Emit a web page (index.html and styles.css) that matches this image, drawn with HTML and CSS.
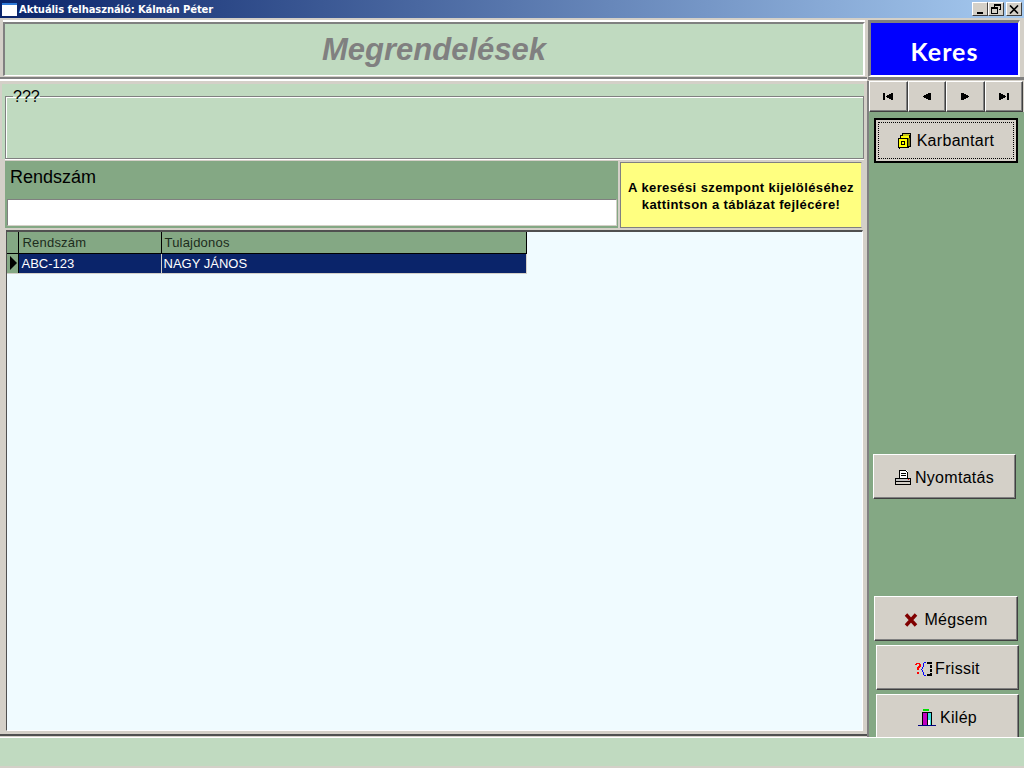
FILE: index.html
```html
<!DOCTYPE html>
<html lang="en">

<head>
    <meta charset="utf-8" />
    <title>Megrendelések</title>
    <link rel="stylesheet" href="styles.css">
</head>

<body>
    <div class="titlebar">
        <span class="app-icon"></span>
        <span class="title-text">Aktuális felhasználó: Kálmán Péter</span>
        <div class="win-buttons">
            <span class="win-btn"><svg width="9" height="9" shape-rendering="crispEdges"><rect x="1" y="7" width="6" height="2"/></svg></span>
            <span class="win-btn"><svg width="10" height="10" fill="none" stroke="#000" shape-rendering="crispEdges"><path d="M3.5 2.5v-2h6v5h-2M3.5 1.5h6M.5 4.5h6v5h-6zM.5 3.5h6v1h-6z"/></svg></span>
            <span class="win-btn win-close"><svg width="10" height="9" stroke="#000" stroke-width="1.6"><path d="M1 0.5l8 8M9 0.5l-8 8"/></svg></span>
        </div>
    </div>

    <div class="main">
        <div class="left">
            <div class="heading">Megrendelések</div>
            <div class="separator"></div>
            <div class="content">
                <div class="group">
                    <fieldset class="group-frame">
                        <legend>???</legend>
                    </fieldset>
                </div>
                <div class="search-row">
                    <div class="search-box">
                        <div class="search-label">Rendszám</div>
                        <input class="search-input" type="text" />
                    </div>
                    <div class="hint">A keresési szempont kijelöléséhez<br>kattintson a táblázat fejlécére!</div>
                </div>
                <div class="grid-area">
                    <table class="grid">
                        <tr>
                            <th class="col-ind"></th>
                            <th class="col-plate">Rendszám</th>
                            <th class="col-owner">Tulajdonos</th>
                        </tr>
                        <tr class="selected">
                            <td class="indicator"><span class="arrow"></span></td>
                            <td class="cell-plate">ABC-123</td>
                            <td>NAGY JÁNOS</td>
                        </tr>
                    </table>
                </div>
                <div class="bottom-line"></div>
            </div>
        </div>

        <div class="right">
            <div class="keres-frame"><div class="keres">Keres</div></div>
            <div class="keres-line"></div>
            <div class="right-lower">
                <div class="nav">
                    <button class="nav-btn"><svg width="10" height="7" shape-rendering="crispEdges"><path d="M0 0h2v7H0zM3 3h1V2h2V1h2V0h2v7H8V6H6V5H4V4H3z"/></svg></button>
                    <button class="nav-btn"><svg width="8" height="7" shape-rendering="crispEdges"><path d="M0 3h1V2h2V1h2V0h3v7H5V6H3V5H1V4H0z"/></svg></button>
                    <button class="nav-btn"><svg width="8" height="7" shape-rendering="crispEdges"><path d="M8 3H7V2H5V1H3V0H0v7h3V6h2V5h2V4h1z"/></svg></button>
                    <button class="nav-btn"><svg width="10" height="7" shape-rendering="crispEdges"><path d="M8 0h2v7H8zM7 3H6V2H4V1H2V0H0v7h2V6h2V5h2V4h1z"/></svg></button>
                </div>
                <div class="side">
                    <button class="btn btn-karbantart">
                        <span class="focus-ring">
                            <svg class="ico" width="13" height="16" shape-rendering="crispEdges">
                                <path d="M4 0h9v14h-2v1H2v1H1v-1H0V5h2V2h2z" fill="#000"/>
                                <path d="M5 1h7v1h-1v1H5z" fill="#c8c820"/>
                                <path d="M3 3h8v2H3z" fill="#ffff00"/>
                                <path d="M1 6h8v8H1z" fill="#ffff00"/>
                                <path d="M3 8h4v1H3zM3 11h4v1H3zM3 8h1v4H3zM6 8h1v4H6z" fill="#000"/>
                                <path d="M10 5h2v8h-2z" fill="#808000"/>
                            </svg>Karbantart
                        </span>
                    </button>
                    <button class="btn btn-print">
                        <svg class="ico" width="16" height="15" shape-rendering="crispEdges">
                            <path d="M4 0h7l2 2v6H4z" fill="#fff"/>
                            <path d="M4 0h7v1H5v7H4zM11 1h1v1h1v6h-1V2h-1zM6 3h5v1H6zM6 5h5v1H6z" fill="#000"/>
                            <path d="M1 8h14v3H1z" fill="#c0c0c0"/>
                            <path d="M0 8h16v1H0zM0 9h1v6H0zM15 9h1v6h-1zM0 14h16v1H0zM1 11h14v1H1z" fill="#000"/>
                            <path d="M13 9h1v1h-1z" fill="#ff0000"/>
                        </svg>Nyomtatás
                    </button>
                    <button class="btn btn-cancel">
                        <svg class="ico" width="14" height="14" fill="none" stroke="#800000" stroke-width="3.4"><path d="M2 1.5l10 11M12 1.5l-10 11"/></svg>Mégsem
                    </button>
                    <button class="btn btn-refresh">
                        <svg class="ico" width="17" height="14" shape-rendering="crispEdges">
                            <path d="M0 2h1V1h4v1h1v3H5v1H4v2H2V5h1V4h1V2H2v1H0zM2 10h2v2H2z" fill="#ff0000"/>
                            <path d="M9 0h2v1H9v4H8v2H7v1h1v2h1v3h2v1H9v-1H8v-3H7V8H6V7h1V5h1V1h1z" fill="#0000ff"/>
                            <path d="M12 0h5v2h-5zM15 3h2v3h-2zM15 7h2v3h-2zM15 11h2v1h-2zM12 12h5v2h-5z" fill="#000"/>
                        </svg>Frissit
                    </button>
                    <button class="btn btn-exit">
                        <svg class="ico" width="18" height="17" shape-rendering="crispEdges">
                            <path d="M5 0h6v2H5z" fill="#00e000"/>
                            <path d="M4 3h10v13H4z" fill="#000"/>
                            <path d="M5 4h4v12H5z" fill="#c000c0"/>
                            <path d="M10 4h3v12h-3z" fill="#40e0e0"/>
                            <path d="M10 11h2v6h-2z" fill="#fff"/>
                            <path d="M0 16h18v1H0z" fill="#000080"/>
                        </svg>Kilép
                    </button>
                </div>
            </div>
        </div>
    </div>

    <div class="footer"></div>
</body>
</html>
```

FILE: styles.css
```css
body {
    margin: 0;
    width: 1024px;
    height: 768px;
    overflow: hidden;
    background: #d4d0c8;
    font-family: "Liberation Sans", Arial, sans-serif;
    color: #000;
}

button {
    font-family: inherit;
    color: #000;
    padding: 0;
}

/* title bar */

.titlebar {
    display: flex;
    align-items: center;
    height: 18px;
    padding-left: 2px;
    background: linear-gradient(to right, #0a246a, #a6caf0);
}

.app-icon {
    width: 15px;
    height: 11px;
    background: #fff;
    border-top: 2px solid #2f7ad8;
}

.title-text {
    margin-left: 2px;
    color: #fff;
    font-family: "DejaVu Sans", sans-serif;
    font-size: 10px;
    font-weight: bold;
    letter-spacing: -0.1px;
    white-space: nowrap;
}

.win-buttons {
    display: flex;
    margin-left: auto;
    margin-right: 2px;
}

.win-btn {
    display: flex;
    align-items: center;
    justify-content: center;
    box-sizing: border-box;
    width: 16px;
    height: 14px;
    background: #d4d0c8;
    border: 1px solid;
    border-color: #fff #404040 #404040 #fff;
}

.win-close {
    margin-left: 2px;
}

/* main layout */

.main {
    display: flex;
    height: 719px;
}

.left {
    width: 867px;
    padding-top: 4px;
    box-sizing: border-box;
}

.heading {
    box-sizing: border-box;
    height: 54px;
    margin-left: 3px;
    margin-right: 2px;
    line-height: 51px;
    text-align: center;
    background: #c0dac0;
    border: 2px solid;
    border-width: 2px 2px 1px 2px;
    border-color: #808080 #fff #fff #808080;
    box-shadow: 0 -2px 0 #fff;
    color: #808080;
    font-size: 31px;
    font-weight: bold;
    font-style: italic;
}

.separator {
    height: 2px;
    margin-top: 1px;
    background: #808080;
    border-bottom: 2px solid #fff;
}

.content {
    padding: 3px 0 0 2px;
}

.group {
    height: 69px;
    padding-top: 6px;
    margin-right: 3px;
    background: #c0dac0;
}

.group-frame {
    box-sizing: border-box;
    height: 69px;
    margin: 0 0 0 3px;
    padding: 0;
    border: 1px solid #808080;
    box-shadow: inset 1px 1px 0 #fff, 0 1px 0 #fff;
}

.group-frame legend {
    margin-left: 7px;
    padding: 0;
    font-size: 16px;
    line-height: 13px;
}

.search-row {
    display: flex;
    height: 67px;
    margin: 2px 0 0 3px;
}

.search-box {
    width: 613px;
    box-sizing: border-box;
    padding: 0 2px;
    background: #84a884;
}

.search-label {
    height: 38px;
    padding-left: 3px;
    line-height: 33px;
    font-size: 18px;
}

.search-input {
    display: block;
    box-sizing: border-box;
    width: 610px;
    height: 27px;
    margin: 0;
    background: #fff;
    border: 1px solid;
    border-color: #808080 #d4d0c8 #d4d0c8 #808080;
    outline: 0;
}

.hint {
    box-sizing: border-box;
    width: 242px;
    margin: 1px 0 0 2px;
    padding-top: 16px;
    text-align: center;
    background: #ffff80;
    border: 1px solid;
    border-color: #808080 #d4d0c8 #808080 #808080;
    font-size: 13px;
    line-height: 17px;
    font-weight: bold;
    letter-spacing: 0.4px;
}

.grid-area {
    box-sizing: border-box;
    width: 857px;
    height: 501px;
    margin: 2px 0 0 4px;
    background: #f0fbff;
    border: 1px solid;
    border-width: 2px 1px 1px 1px;
    border-color: #505050 #fff #fff #505050;
}

.grid {
    width: 520px;
    table-layout: fixed;
    border-collapse: collapse;
    font-size: 13px;
}

.grid th,
.grid td {
    box-sizing: border-box;
    height: 20px;
    padding: 0 0 0 2px;
    font-weight: normal;
    text-align: left;
    white-space: nowrap;
}

.grid th {
    height: 21px;
    background: #84a884;
    border-right: 1px solid #000;
    border-bottom: 1px solid #000;
    padding-left: 3px;
    color: #1c2c1c;
    letter-spacing: 0.2px;
}

.col-ind {
    width: 11px;
}

.grid .col-plate {
    width: 143px;
    padding-left: 4px;
}

.selected td {
    background: #0a246a;
    color: #fff;
    border-right: 1px solid #d4d0c8;
    border-bottom: 1px solid #d4d0c8;
}

.grid .cell-plate {
    padding-left: 3px;
}

.selected td.indicator {
    padding: 0;
    background: #84a884;
    border-right-color: #000;
}

.arrow {
    display: block;
    width: 0;
    height: 0;
    margin-left: 3px;
    border-style: solid;
    border-width: 7px 0 7px 7px;
    border-color: transparent transparent transparent #000;
}

.bottom-line {
    height: 2px;
    margin: 3px 0 0 -2px;
    background: #505050;
}

/* right column */

.right {
    width: 157px;
}

.keres-frame {
    box-sizing: border-box;
    width: 152px;
    height: 57px;
    margin: 2px 0 0 1px;
    border: 3px solid;
    border-width: 3px 2px 2px 3px;
    border-color: #808080 #fff #fff #808080;
}

.keres {
    height: 100%;
    text-align: center;
    line-height: 56px;
    background: #0000ff;
    color: #fff;
    font-family: "Comic Sans MS", "Lato", sans-serif;
    font-size: 25px;
    font-weight: bold;
    letter-spacing: 1px;
}

.keres-line {
    height: 3px;
    margin: 0 0 1px 1px;
    background: #808080;
}

.right-lower {
    border-left: 2px solid #808080;
}

.nav {
    display: flex;
    width: 154px;
}

.nav-btn,
.btn {
    background: #d4d0c8;
    border: 1px solid;
    border-color: #fff #404040 #404040 #fff;
}

.nav-btn {
    flex: 1;
    height: 31px;
    box-shadow: inset -1px -1px 0 #808080;
    display: flex;
    align-items: center;
    justify-content: center;
}

.side {
    height: 625px;
    box-sizing: border-box;
    padding-top: 6px;
    background: #84a884;
    overflow: hidden;
}

.btn {
    display: flex;
    align-items: center;
    justify-content: center;
    box-sizing: border-box;
    width: 144px;
    height: 45px;
    padding-top: 2px;
    font-size: 16px;
    letter-spacing: 0.3px;
    box-shadow: inset -1px -1px 0 #808080;
}

.ico {
    margin-right: 6px;
}

.btn-karbantart {
    margin-left: 5px;
    padding-top: 0;
    border: 2px solid #000;
    box-shadow: none;
}

.focus-ring {
    display: flex;
    align-items: center;
    justify-content: center;
    box-sizing: border-box;
    width: 136px;
    height: 37px;
    border: 1px dotted #000;
}

.btn-print {
    width: 143px;
    margin: 291px 0 0 4px;
}

.btn-print .ico {
    margin-right: 4px;
}

.btn-cancel {
    margin: 97px 0 0 5px;
}

.btn-refresh {
    width: 143px;
    margin: 4px 0 0 7px;
}

.btn-refresh .ico {
    margin-right: 3px;
}

.btn-exit {
    width: 143px;
    margin: 4px 0 0 7px;
}

.btn-exit .ico {
    margin-right: 4px;
}

.footer {
    height: 28px;
    background: #c0dac0;
    border-top: 1px solid #fff;
}
```
